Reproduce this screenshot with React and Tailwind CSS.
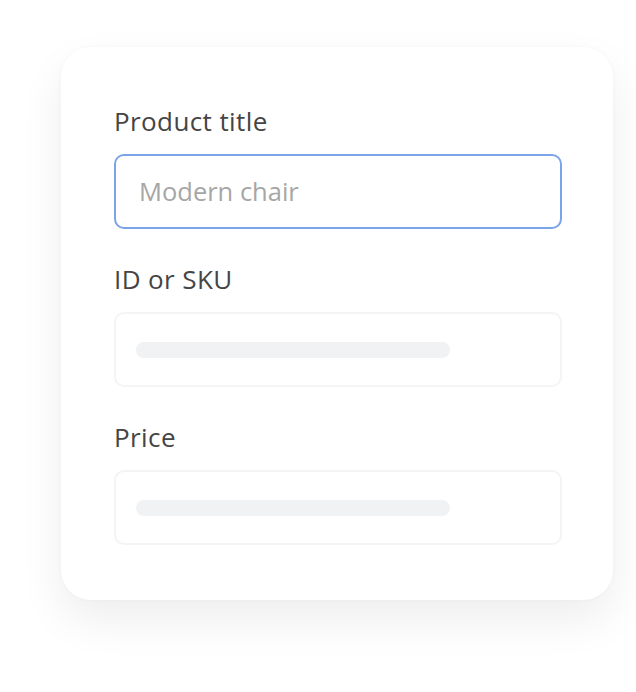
export default function App() {
  const font = { fontFamily: "'Open Sans', Roboto, sans-serif" };
  return (
    <div className="min-h-[692px] w-[636px] bg-white pt-[47px] pl-[61px]" style={font}>
      <div className="w-[552px] h-[553px] rounded-[30px] bg-white pl-[53px] pr-[51px] pt-[58px] shadow-[0_20px_45px_rgba(0,0,0,0.07),0_0_4px_rgba(0,0,0,0.03)] flex flex-col">
        <label className="block text-[26px] leading-[32px] tracking-[0.4px] text-[#454545]">Product title</label>
        <div className="mt-[17px] h-[75px] rounded-[10px] border-2 border-[#7ba4e8] flex items-center pl-[23px] text-[25.5px] text-[#a6a6a6]">
          Modern chair
        </div>
        <label className="mt-[34px] block text-[26px] leading-[32px] tracking-[0.4px] text-[#454545]">ID or SKU</label>
        <div className="mt-[17px] h-[75px] rounded-[10px] border-2 border-[#f4f4f5] flex items-center pl-[20px]">
          <div className="h-[16px] w-[314px] rounded-full bg-[#f1f2f4]" />
        </div>
        <label className="mt-[34px] block text-[26px] leading-[32px] tracking-[0.4px] text-[#454545]">Price</label>
        <div className="mt-[17px] h-[75px] rounded-[10px] border-2 border-[#f4f4f5] flex items-center pl-[20px]">
          <div className="h-[16px] w-[314px] rounded-full bg-[#f1f2f4]" />
        </div>
      </div>
    </div>
  );
}
